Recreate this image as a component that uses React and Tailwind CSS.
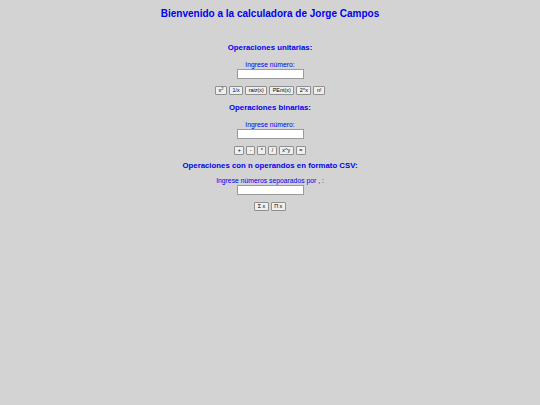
import { useState } from "react";

const UNARY = [
  { key: "sq", label: <>x<sup className="text-[4px] align-super">2</sup></> },
  { key: "inv", label: "1/x" },
  { key: "sqrt", label: "raiz(x)" },
  { key: "int", label: "PEnt(x)" },
  { key: "pow2", label: "2^x" },
  { key: "fact", label: "n!" },
];

const BINARY = ["+", "-", "*", "/", "x^y", "="];

const NARY = ["Σ x", "Π x"];

function Btn({ children, onClick }) {
  return (
    <button
      onClick={onClick}
      className="h-[9px] px-[2.5px] bg-[#efefef] border border-[#8f8f8f] rounded-[1px] text-[5.4px] leading-[7px] text-black flex items-center justify-center"
    >
      {children}
    </button>
  );
}

function Section({ title, label, buttons, mt, gap = "mt-[8px]" }) {
  const [value, setValue] = useState("");
  return (
    <div className={`flex flex-col items-center ${mt}`}>
      <h3 className="text-[7.8px] leading-[10px] font-bold text-[#0000ee]">{title}</h3>
      <label className={`${gap} text-[6.8px] leading-[7px] text-[#0000ee]`}>{label}</label>
      <input
        value={value}
        onChange={(e) => setValue(e.target.value)}
        className="mt-[1px] w-[67px] h-[10px] bg-white border border-[#9a9a9a] outline-none text-[6px]"
      />
      <div className="mt-[7px] flex gap-[2px]">
        {buttons.map((b) => (
          <Btn key={b.key ?? b}>{b.label ?? b}</Btn>
        ))}
      </div>
    </div>
  );
}

export default function App() {
  return (
    <div
      className="min-h-[405px] w-full bg-[#d3d3d3] pt-[8px] flex flex-col items-center"
      style={{ fontFamily: '"Liberation Sans", Arial, sans-serif' }}
    >
      <h1 className="text-[10px] leading-[12px] font-bold text-[#0000ee]">
        Bienvenido a la calculadora de Jorge Campos
      </h1>

      <Section mt="mt-[23px]" title="Operaciones unitarias:" label="Ingrese número:" buttons={UNARY} />
      <Section mt="mt-[8px]" title="Operaciones binarias:" label="Ingrese número:" buttons={BINARY} />
      <Section
        mt="mt-[6px]"
        gap="mt-[6px]"
        title="Operaciones con n operandos en formato CSV:"
        label="Ingrese números sepoarados por , :"
        buttons={NARY}
      />
    </div>
  );
}
